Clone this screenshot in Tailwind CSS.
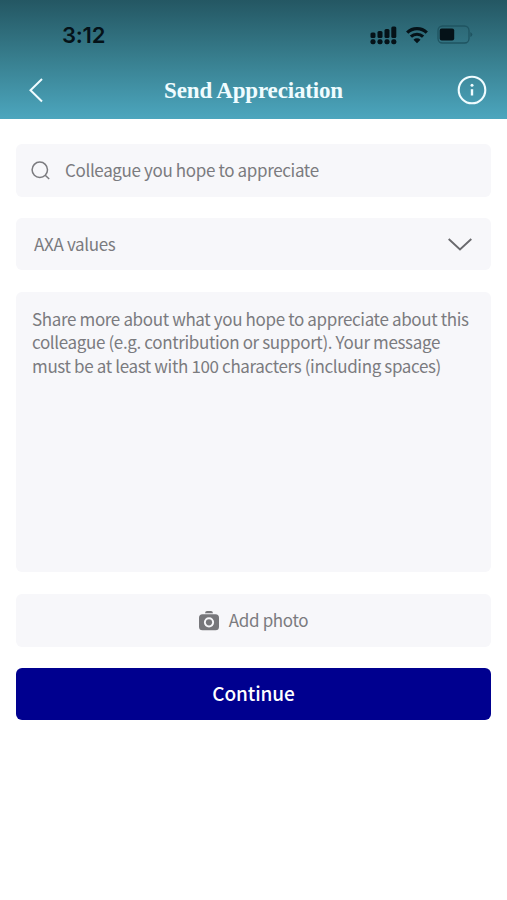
<!DOCTYPE html>
<html lang="en">
<head>
  <meta charset="UTF-8" />
  <meta name="viewport" content="width=device-width, initial-scale=1.0" />
  <title>Send Appreciation</title>
  <script src="https://cdn.jsdelivr.net/npm/@tailwindcss/browser@4"></script>
</head>
<body class="bg-white min-h-screen font-['Noto_Sans_CJK_SC',sans-serif] text-[#7b7b7f]">

  <!-- Header -->
  <header class="h-[119px] bg-linear-to-b from-[#245763] via-[#387f8f] to-[#4ca6be]">
    <!-- Status bar -->
    <div class="h-[62px] pt-[7px] pl-[62px] pr-[34px] flex items-center justify-between text-[#051218]">
      <span class="font-['Inter',sans-serif] font-semibold text-[22px] leading-none tracking-[-0.2px]">3:12</span>
      <div class="flex items-center">
        <svg class="w-[27px] h-5" viewBox="0 0 27 20" fill="currentColor">
          <rect x="0.5" y="7.5" width="5" height="5.5" rx="1.5" />
          <rect x="7.5" y="6" width="5" height="7" rx="1.5" />
          <rect x="14.5" y="4" width="5" height="9" rx="1.5" />
          <rect x="21.3" y="1.5" width="5" height="11.5" rx="1.5" />
          <rect x="0.5" y="14.3" width="5" height="5" rx="2" />
          <rect x="7.5" y="14.3" width="5" height="5" rx="2" />
          <rect x="14.5" y="14.3" width="5" height="5" rx="2" />
          <rect x="21.3" y="14.3" width="5" height="5" rx="2" />
        </svg>
        <svg class="ml-[9px] w-[22px] h-[18px]" viewBox="0 0 22 18" fill="none" stroke="currentColor" stroke-width="3.2">
          <path d="M1.2 6.7a14 14 0 0 1 19.6 0" />
          <path d="M4.9 10.7a8.8 8.8 0 0 1 12.2 0" />
          <path d="M11 17.2l-3.5-3.5a5 5 0 0 1 7 0z" fill="currentColor" stroke="none" />
        </svg>
        <svg class="ml-[9px] w-[36px] h-[19px]" viewBox="0 0 36 19">
          <rect x="1" y="1" width="31" height="17" rx="4.5" fill="none" stroke="#1f5461" stroke-width="1.3" />
          <rect x="2.7" y="3.5" width="14.5" height="12" rx="2" fill="currentColor" />
          <path d="M33.3 7v5q2-1 2-2.5t-2-2.5z" fill="#1f5461" />
        </svg>
      </div>
    </div>

    <!-- Title bar -->
    <div class="h-14 pl-5 pr-5 grid grid-cols-[30px_1fr_30px] items-center text-[#f0fcff]">
      <svg class="ml-2 w-[30px] h-[26px]" viewBox="0 0 30 26" fill="none" stroke="currentColor" stroke-width="2">
        <path d="M14 2L2.5 13.2 14 24.5" />
      </svg>
      <h1 class="pt-px font-['Liberation_Serif',serif] font-bold text-[23px] leading-none tracking-[-0.17px] text-center whitespace-nowrap">Send Appreciation</h1>
      <svg class="w-[30px] h-[30px]" viewBox="0 0 30 30" fill="none" stroke="currentColor">
        <circle cx="15" cy="15" r="13.3" stroke-width="2.1" />
        <circle cx="15" cy="10.3" r="1.5" fill="currentColor" stroke="none" />
        <path d="M15 14.2v6.3" stroke-width="2.4" />
      </svg>
    </div>
  </header>

  <!-- Form -->
  <main class="px-4 pt-[25px] text-[17px] tracking-[-0.36px]">
    <div class="h-[53px] pl-[15px] rounded-md bg-[#f7f7fa] flex items-center">
      <svg class="w-[19px] h-[19px]" viewBox="0 0 19 19" fill="none" stroke="currentColor" stroke-width="1.5">
        <circle cx="8.8" cy="8.8" r="7.7" />
        <path d="M14.2 14.2l4 3.8" />
      </svg>
      <span class="ml-[15px] pb-px">Colleague you hope to appreciate</span>
    </div>

    <div class="mt-[21px] h-[52px] pl-[18px] pr-[19px] rounded-md bg-[#f7f7fa] flex items-center justify-between">
      <span>AXA values</span>
      <svg class="w-6 h-[13px]" viewBox="0 0 24 13" fill="none" stroke="#69696d" stroke-width="1.9">
        <path d="M0.7 1l11.3 10.5L23.3 1" />
      </svg>
    </div>

    <div class="mt-[22px] h-[280px] px-4 pt-[15px] rounded-md bg-[#f7f7fa] leading-[23.3px] whitespace-nowrap">
      Share more about what you hope to appreciate about this<br />
      colleague (e.g. contribution or support). Your message<br />
      must be at least with 100 characters (including spaces)
    </div>

    <div class="mt-[22px] h-[53px] rounded-md bg-[#f7f7fa] flex items-center justify-center gap-[10px]">
      <svg class="w-5 h-5" viewBox="0 0 20 20" fill="#77777b">
        <path d="M6 2.3Q6.300 0 8 0h4q1.700 0 2 2.300z" />
        <path fill-rule="evenodd" d="M3.500 3.300h13q3.500 0 3.500 3.500v9q0 3.500-3.500 3.500h-13q-3.500 0-3.500-3.500v-9q0-3.500 3.500-3.500zM10 6.200a5.100 5.100 0 1 0 0 10.200a5.100 5.100 0 1 0 0-10.200z" />
        <circle cx="10" cy="11.300" r="3.100" />
      </svg>
      <span class="pb-px">Add photo</span>
    </div>

    <button class="mt-[21px] pb-px w-full h-[52px] rounded-md bg-[#00008f] text-white text-[19px] font-medium tracking-[-0.1px] flex items-center justify-center">Continue</button>
  </main>

</body>
</html>
